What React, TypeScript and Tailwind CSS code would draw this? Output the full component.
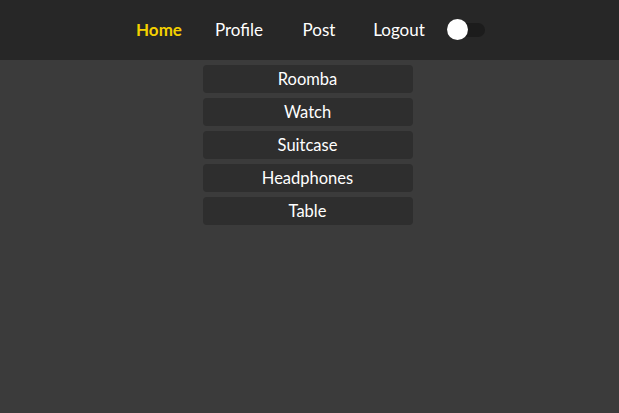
import React from "react";

const items = ["Roomba", "Watch", "Suitcase", "Headphones", "Table"];

export default function App() {
  return (
    <div className="min-h-[413px] w-full bg-[#3b3b3b] text-[16px] text-white" style={{ fontFamily: "Lato, 'Noto Sans', sans-serif" }}>
      <header className="flex h-[60px] items-center justify-center bg-[#272727] text-[17px]">
        <a className="flex w-[80px] justify-center font-bold text-[#f4d000]">Home</a>
        <a className="flex w-[80px] justify-center">Profile</a>
        <a className="flex w-[80px] justify-center">Post</a>
        <a className="flex w-[80px] justify-center">Logout</a>
        <div className="relative ml-[8px] mr-[15px] h-[14px] w-[38px] rounded-full bg-[#1c1c1c]">
          <div className="absolute left-0 top-[-4px] h-[21px] w-[21px] rounded-full bg-white" />
        </div>
      </header>
      <main className="flex flex-col items-center gap-[5px] pr-[4px] pt-[5px]">
        {items.map((it) => (
          <div key={it} className="flex h-[28px] w-[210px] items-center justify-center rounded-[4px] bg-[#2e2e2e] text-[16.5px]">
            {it}
          </div>
        ))}
      </main>
    </div>
  );
}
